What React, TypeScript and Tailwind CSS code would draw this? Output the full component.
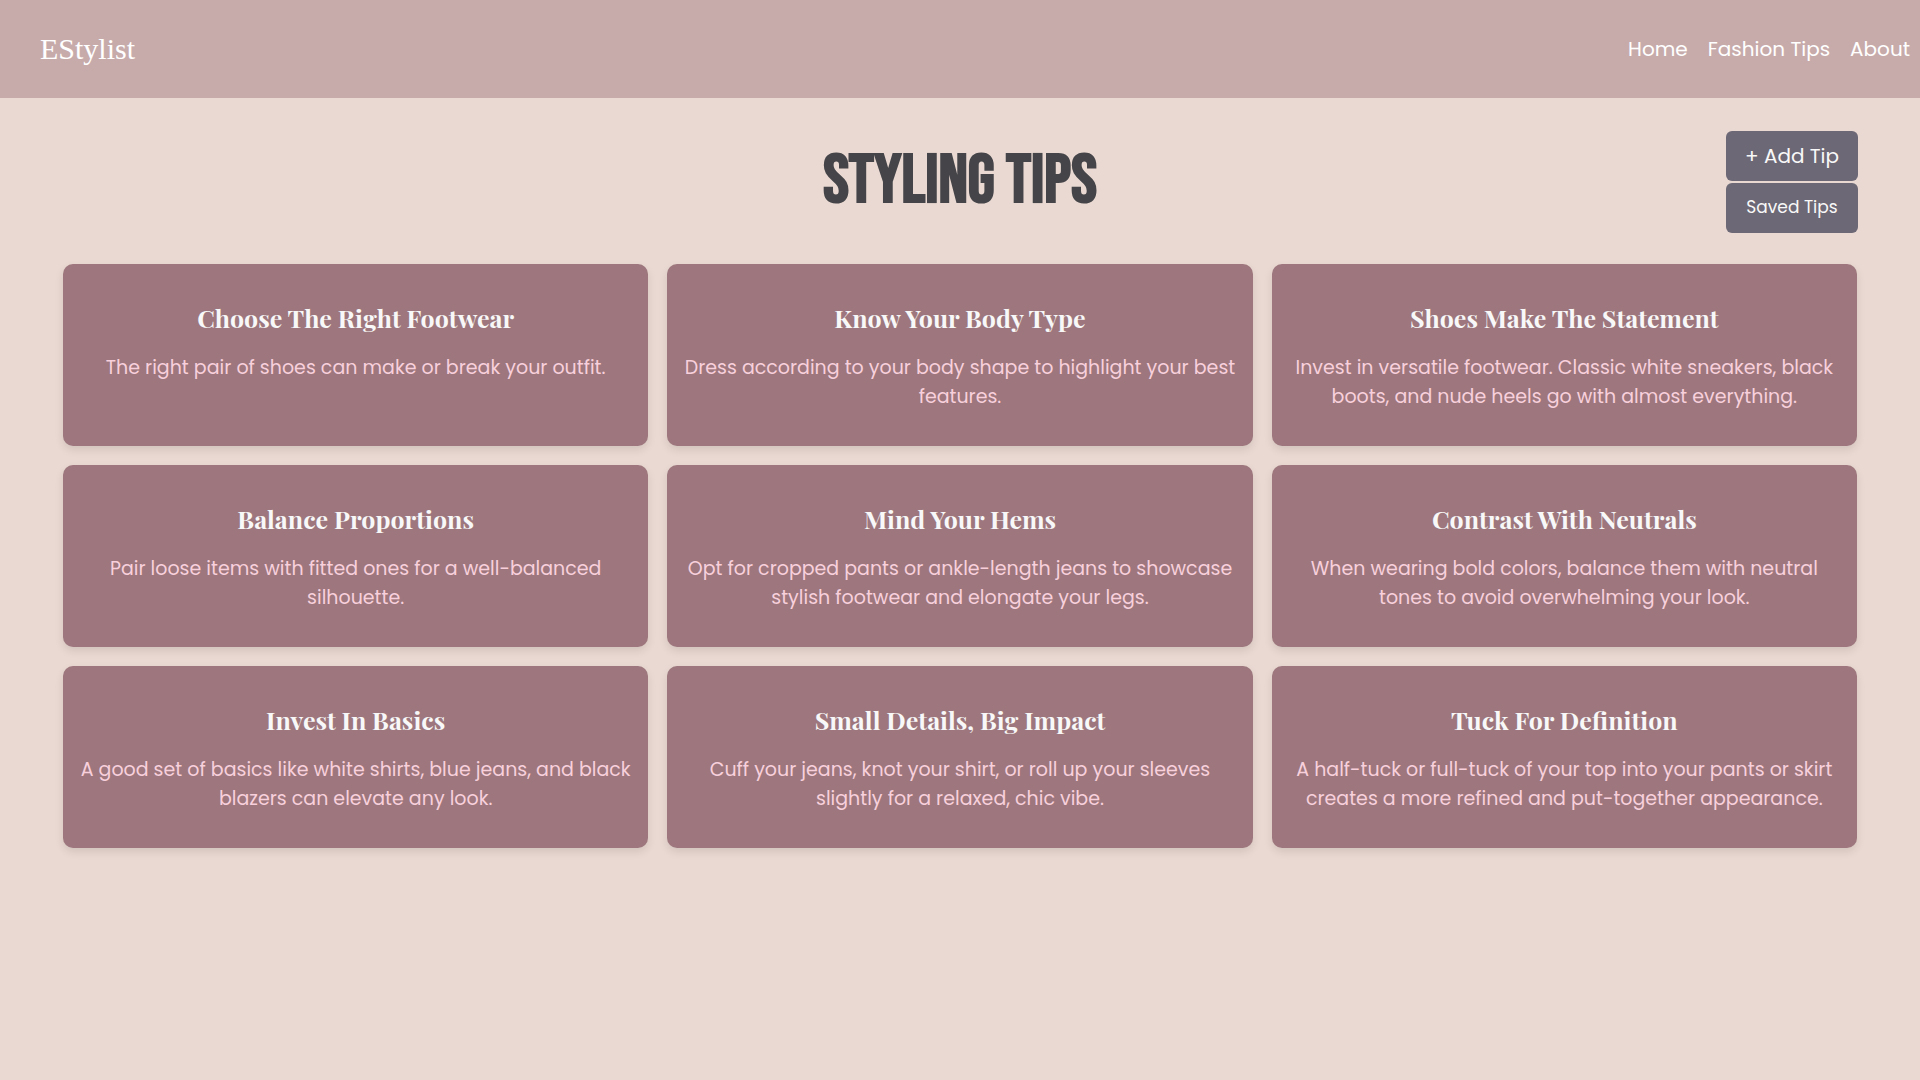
const tips = [
  { title: 'Choose The Right Footwear', text: 'The right pair of shoes can make or break your outfit.' },
  { title: 'Know Your Body Type', text: 'Dress according to your body shape to highlight your best features.' },
  { title: 'Shoes Make The Statement', text: 'Invest in versatile footwear. Classic white sneakers, black boots, and nude heels go with almost everything.' },
  { title: 'Balance Proportions', text: 'Pair loose items with fitted ones for a well-balanced silhouette.' },
  { title: 'Mind Your Hems', text: 'Opt for cropped pants or ankle-length jeans to showcase stylish footwear and elongate your legs.' },
  { title: 'Contrast With Neutrals', text: 'When wearing bold colors, balance them with neutral tones to avoid overwhelming your look.' },
  { title: 'Invest In Basics', text: 'A good set of basics like white shirts, blue jeans, and black blazers can elevate any look.' },
  { title: 'Small Details, Big Impact', text: 'Cuff your jeans, knot your shirt, or roll up your sleeves slightly for a relaxed, chic vibe.' },
  { title: 'Tuck For Definition', text: 'A half-tuck or full-tuck of your top into your pants or skirt creates a more refined and put-together appearance.' },
];

const links = ['Home', 'Fashion Tips', 'About'];

function Navbar() {
  return (
    <header className="flex h-[98px] items-center justify-between bg-[#c7abab] pr-[10px] pl-10 text-white">
      <a href="#" className="pb-[2px] font-['Liberation_Serif',serif] text-[30px]">EStylist</a>
      <nav className="flex gap-5 text-[20px]">
        {links.map((link) => (
          <a key={link} href="#">{link}</a>
        ))}
      </nav>
    </header>
  );
}

function TipCard({ title, text }: { title: string; text: string }) {
  return (
    <article className="rounded-[10px] bg-[#9d777d] px-4 py-[35px] text-center shadow-[0_4px_8px_rgba(0,0,0,0.1)]">
      <h2 className="font-['Playfair_Display','Liberation_Serif',serif] text-[25px] leading-[38px] font-bold text-[#f8f8f8]">{title}</h2>
      <p className="mt-4 text-[19px] leading-[29px] text-[#f8d0dc]">{text}</p>
    </article>
  );
}

export default function App() {
  return (
    <div className="min-h-screen bg-[#ead9d2] font-['Poppins','Inter',sans-serif]">
      <Navbar />
      <main className="px-[62px] pt-[33px]">
        <div className="grid grid-cols-[1fr_auto_1fr] items-center">
          <h1 className="col-start-2 font-['Bebas_Neue','Roboto_Condensed',sans-serif] text-[69px] leading-[102px] font-bold text-[#454549]">STYLING TIPS</h1>
          <div className="flex w-[132px] flex-col gap-[2px] justify-self-end text-[#f8f8f8]">
            <button type="button" className="h-[50px] rounded-md bg-[#6d6875] text-[20px]">+ Add Tip</button>
            <button type="button" className="h-[50px] rounded-md bg-[#6d6875] text-[17px]">Saved Tips</button>
          </div>
        </div>
        <section className="mt-[31px] grid grid-cols-3 gap-[19px] px-px">
          {tips.map((tip) => (
            <TipCard key={tip.title} {...tip} />
          ))}
        </section>
      </main>
    </div>
  );
}
